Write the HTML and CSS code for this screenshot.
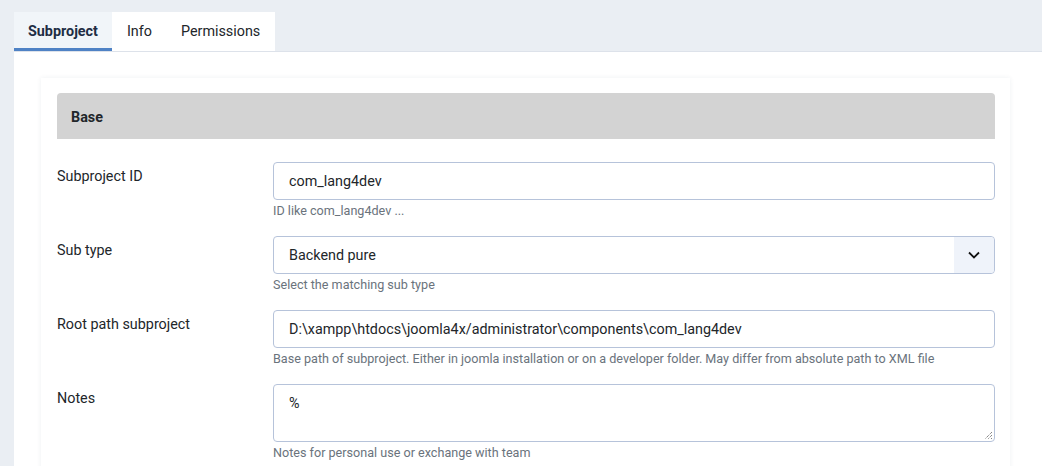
FILE: index.html
```html
<!DOCTYPE html>
<html>
<head>
<meta charset="utf-8">
<link rel="stylesheet" href="styles.css">
</head>
<body>
<div class="page">
  <div class="tabs">
    <div class="tab active">Subproject</div>
    <div class="tab">Info</div>
    <div class="tab">Permissions</div>
  </div>
  <div class="panel">
    <div class="card">
      <div class="card-header">Base</div>
      <div class="form">
        <div class="row">
          <div class="label">Subproject ID</div>
          <div class="control">
            <div class="input">com_lang4dev</div>
            <div class="help">ID like com_lang4dev ...</div>
          </div>
        </div>
        <div class="row">
          <div class="label">Sub type</div>
          <div class="control">
            <div class="input select">
              <span class="sel-text">Backend pure</span>
              <span class="sel-btn">
                <svg width="14" height="14" viewBox="0 0 14 14"><path d="M2 4.5 L7 9.5 L12 4.5" fill="none" stroke="#111" stroke-width="1.8"/></svg>
              </span>
            </div>
            <div class="help">Select the matching sub type</div>
          </div>
        </div>
        <div class="row">
          <div class="label">Root path subproject</div>
          <div class="control">
            <div class="input">D:\xampp\htdocs\joomla4x/administrator\components\com_lang4dev</div>
            <div class="help">Base path of subproject. Either in joomla installation or on a developer folder. May differ from absolute path to XML file</div>
          </div>
        </div>
        <div class="row">
          <div class="label">Notes</div>
          <div class="control">
            <div class="input textarea">%
              <svg class="grip" width="10" height="10" viewBox="0 0 10 10"><path d="M9 2 L2 9 M9 5 L5 9 M9 8 L8 9" stroke="#555" stroke-width="1" stroke-dasharray="1 1"/></svg>
            </div>
            <div class="help">Notes for personal use or exchange with team</div>
          </div>
        </div>
      </div>
    </div>
  </div>
</div>
</body>
</html>
```

FILE: styles.css
```css
* { box-sizing: border-box; }
html, body { margin: 0; padding: 0; }
body {
  background: #eaeef3;
  font-family: Roboto, "Liberation Sans", sans-serif;
  font-size: 14.35px;
  color: #22262a;
  overflow: hidden;
}
.page {
  padding: 12px 0 0 14px;
}
.tabs {
  display: flex;
  width: 261px;
  background: #fff;
  height: 39px;
}
.tab {
  padding: 1px 14.5px 0;
  line-height: 38px;
  color: #22262a;
}
.tab.active {
  padding-left: 14px;
  background: #f1f5f9;
  font-weight: bold;
  color: #1f2d44;
  box-shadow: inset 0 -3px 0 0 #4f82c5;
}
.panel {
  background: #fff;
  border-top: 1px solid #dde2ea;
  padding: 26px 32px 0 27px;
  height: 420px;
}
.card {
  background: #fff;
  box-shadow: 0 0 5px rgba(30, 50, 90, 0.07);
  padding: 15px 15px 0 16px;
  height: 400px;
}
.card-header {
  background: #d3d3d3;
  height: 46px;
  line-height: 49px;
  padding-left: 14px;
  font-weight: bold;
  color: #22262a;
  border-radius: 4px 4px 0 0;
}
.form {
  padding-top: 23px;
}
.row {
  display: flex;
  margin-bottom: 16px;
}
.label {
  width: 216px;
  flex: none;
  padding-top: 5px;
  line-height: 20px;
}
.control {
  flex: 1;
  min-width: 0;
}
.input {
  height: 38px;
  border: 1px solid #b6c3da;
  border-radius: 4px;
  padding: 0 15px;
  line-height: 37px;
  background: #fff;
  white-space: nowrap;
}
.select {
  display: flex;
  padding-right: 0;
  overflow: hidden;
}
.sel-text { flex: 1; }
.sel-btn {
  width: 40px;
  background: #eff3fa;
  display: flex;
  align-items: center;
  justify-content: center;
  border-radius: 0 3px 3px 0;
}
.textarea {
  height: 58px;
  line-height: 37px;
  position: relative;
}
.grip {
  position: absolute;
  right: 1px;
  bottom: 1px;
}
.help {
  margin-top: 2px;
  font-size: 12.6px;
  line-height: 18px;
  color: #6a737c;
}
```
